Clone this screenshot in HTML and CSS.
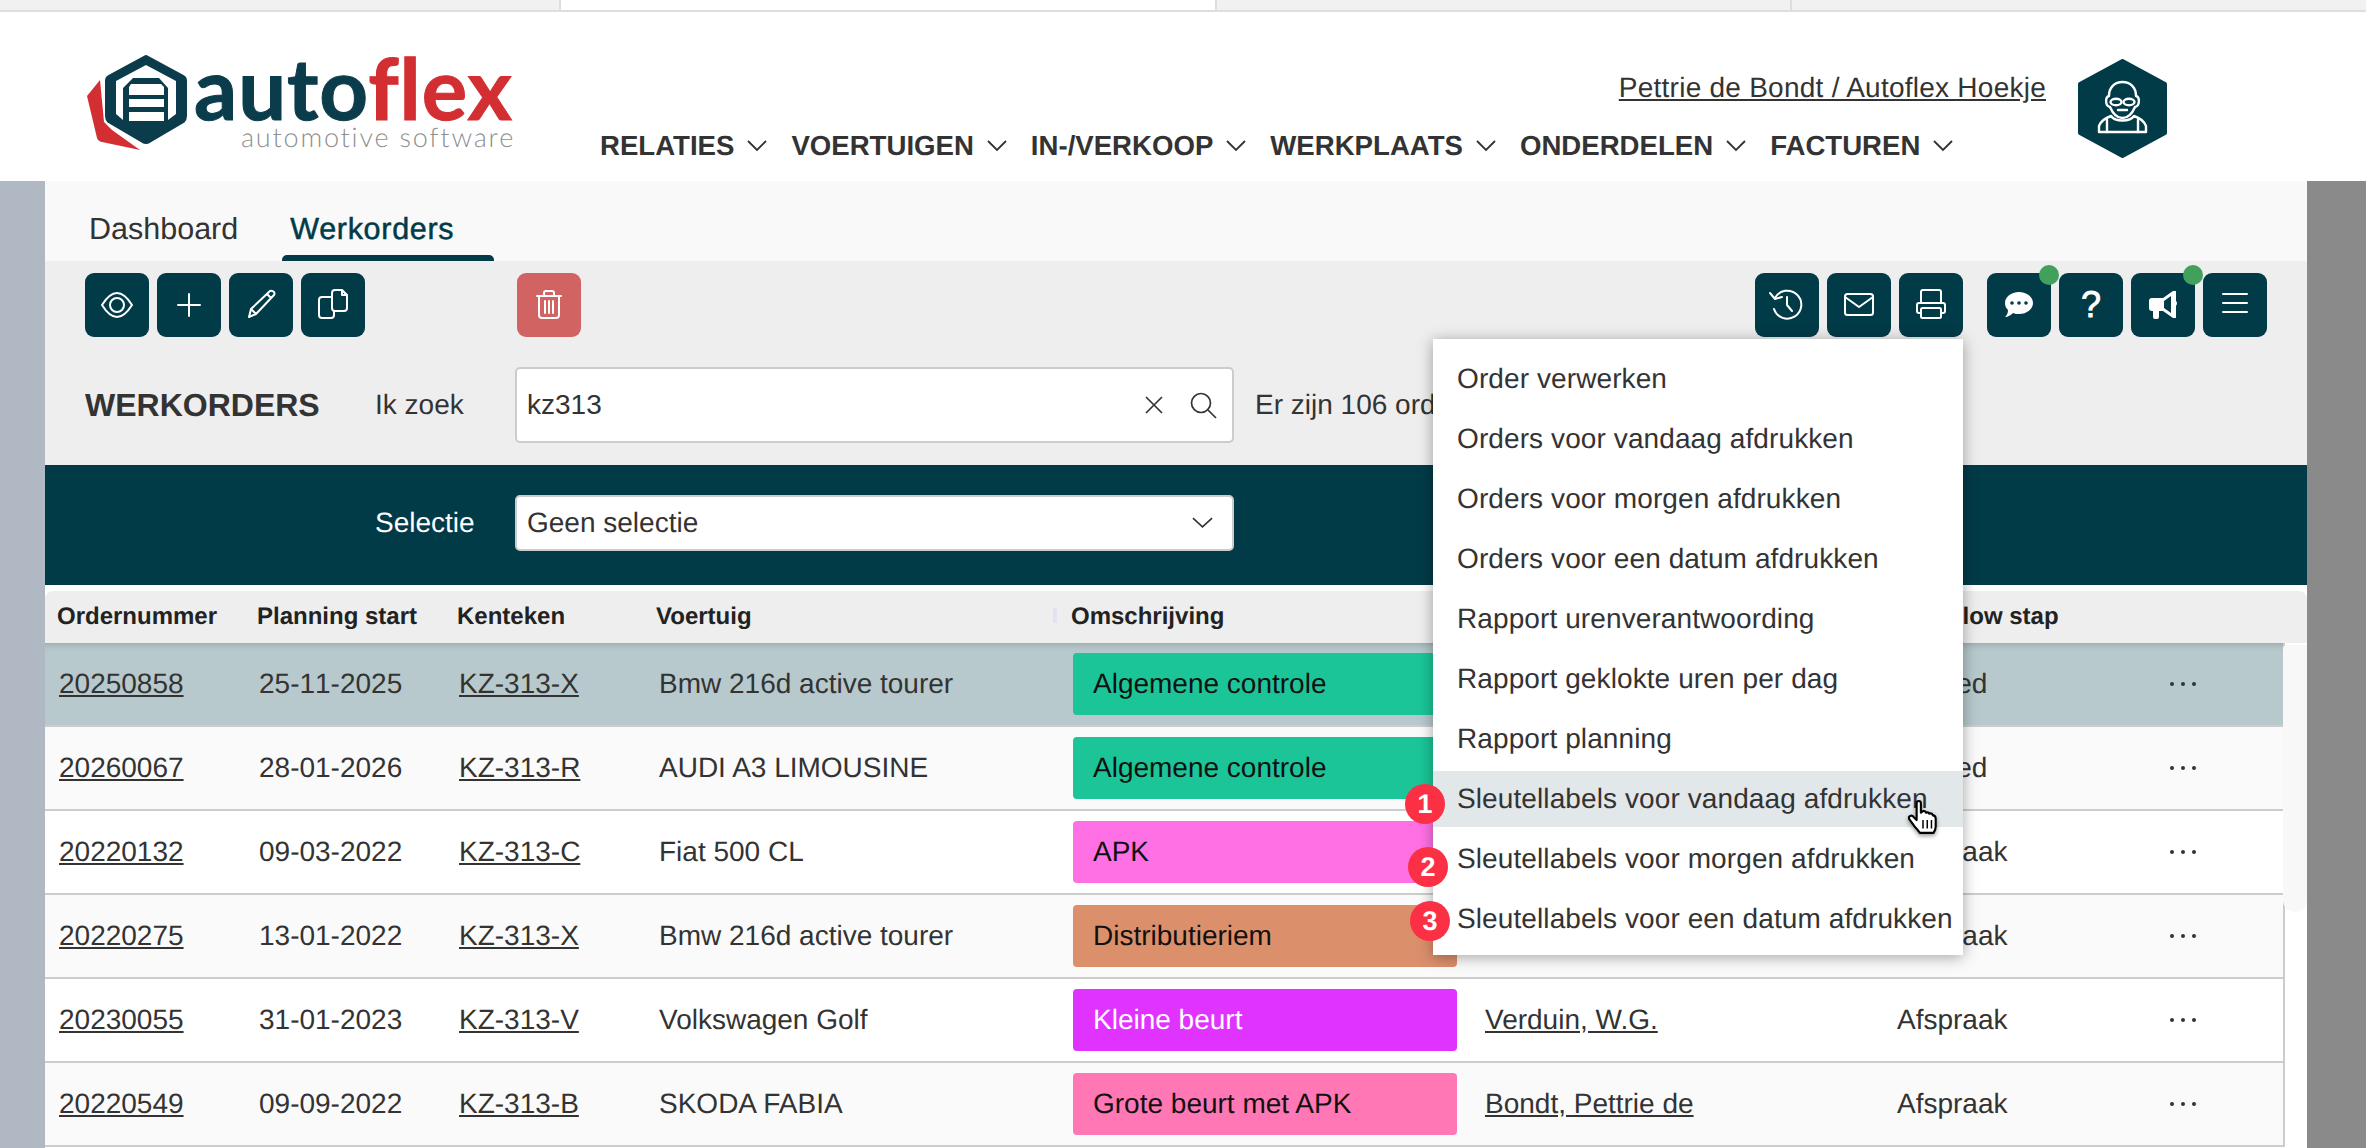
FILE: index.html
```html
<!DOCTYPE html>
<html lang="nl">
<head>
  <meta charset="UTF-8">
  <meta name="viewport" content="width=device-width, initial-scale=1.0">
  <title>Autoflex - Werkorders</title>
  <link rel="stylesheet" href="styles.css">
</head>

<body>
  <div class="browser-tabs">
    <div class="browser-tab tab-first"></div>
    <div class="browser-tab tab-current"></div>
    <div class="browser-tab tab-second"></div>
    <div class="browser-tab tab-last"></div>
  </div>

  <header class="site-header">
    <svg class="logo" viewBox="85 30 440 130" width="440" height="130">
      <path d="M100 80 L87 96 L97 138 Q98 141 102 142 L140 150 L112 130 L104 122 Z" fill="#d32f33"/>
      <path d="M146 57 L183 77 Q185 78 185 81 V116 Q185 119 183 121 L149 141 Q146 143 143 141 L109 121 Q107 119 107 116 V81 Q107 78 109 77 Z" fill="#0b3c4b" stroke="#0b3c4b" stroke-width="4" stroke-linejoin="round"/>
      <path d="M146 65 L176 81 V114 L168 120 V88 L159 78 H133 L123 88 V120 L116 114 V81 Z" fill="#fff"/>
      <path d="M131 84 H161 L164 87 V95 H129 V87 Z" fill="#fff"/>
      <rect x="129" y="99" width="35" height="8" fill="#fff"/>
      <rect x="129" y="112" width="35" height="9" fill="#fff"/>
      <text class="logo-name" x="194" y="120">auto<tspan class="logo-flex">flex</tspan></text>
      <text class="logo-sub" x="241" y="147">automotive software</text>
    </svg>

    <div class="header-main">
      <a class="user-name" href="#">Pettrie de Bondt / Autoflex Hoekje</a>
      <nav class="main-nav">
        <a class="nav-item" href="#">RELATIES <svg class="nav-chevron" viewBox="0 0 20 12"><path d="M1 1l9 9 9-9"/></svg></a>
        <a class="nav-item" href="#">VOERTUIGEN <svg class="nav-chevron" viewBox="0 0 20 12"><path d="M1 1l9 9 9-9"/></svg></a>
        <a class="nav-item" href="#">IN-/VERKOOP <svg class="nav-chevron" viewBox="0 0 20 12"><path d="M1 1l9 9 9-9"/></svg></a>
        <a class="nav-item" href="#">WERKPLAATS <svg class="nav-chevron" viewBox="0 0 20 12"><path d="M1 1l9 9 9-9"/></svg></a>
        <a class="nav-item" href="#">ONDERDELEN <svg class="nav-chevron" viewBox="0 0 20 12"><path d="M1 1l9 9 9-9"/></svg></a>
        <a class="nav-item" href="#">FACTUREN <svg class="nav-chevron" viewBox="0 0 20 12"><path d="M1 1l9 9 9-9"/></svg></a>
      </nav>
    </div>

    <svg class="avatar" viewBox="0 0 89 99" width="89" height="99">
      <path d="M44.5 2 L87 25 V74 L44.5 97 L2 74 V25 Z" fill="#023b48" stroke="#023b48" stroke-width="4" stroke-linejoin="round"/>
      <g fill="none" stroke="#fff" stroke-width="2.4" stroke-linecap="round" stroke-linejoin="round">
        <path d="M31 37 C31 28 37 23 44.5 23 C52 23 58 28 58 37 C62 38 62 47 57 48 C54 55 50 59 44.5 59 C39 59 35 55 32 48 C27 47 27 38 31 37Z"/>
        <ellipse cx="38" cy="43" rx="5.5" ry="3.2"/>
        <ellipse cx="51" cy="43" rx="5.5" ry="3.2"/>
        <path d="M40 51 H49"/>
        <path d="M33 57 C27 59 23 62 21 67 V73 H68 V67 C66 62 62 59 56 57 C52 63 37 63 33 57Z"/>
        <path d="M29 61 V73 M60 61 V73"/>
      </g>
    </svg>
  </header>

  <div class="page">
    <div class="side-left"></div>

    <main class="panel">
      <div class="tabs">
        <a class="tab" href="#">Dashboard</a>
        <a class="tab tab-active" href="#">Werkorders</a>
      </div>

      <section class="toolbar-area">
        <div class="toolbar">
          <div class="btn-group">
            <button class="icon-btn"><svg viewBox="0 0 64 64"><path d="M17 32 C22 24 27 20 32 20 C37 20 42 24 47 32 C42 40 37 44 32 44 C27 44 22 40 17 32Z"/><circle cx="32" cy="32" r="7"/></svg></button>
            <button class="icon-btn"><svg viewBox="0 0 64 64"><path d="M32 21 V43 M21 32 H43"/></svg></button>
            <button class="icon-btn"><svg viewBox="0 0 64 64"><path d="M20 44 L22 36 L41 18 Q43 17 45 19 Q46 21 45 22 L27 41 Z M22 36 L27 41 M38 21 L42 25"/></svg></button>
            <button class="icon-btn"><svg viewBox="0 0 64 64"><path d="M30 24 H21 Q18 24 18 27 V42 Q18 45 21 45 H30 Q33 45 33 42 V38"/><path d="M34 17 H41 L46 22 V35 Q46 38 43 38 H34 Q31 38 31 35 V20 Q31 17 34 17Z M41 17 V22 H46"/></svg></button>
          </div>
          <button class="icon-btn btn-delete"><svg viewBox="0 0 64 64"><path d="M20 23 H44 M27 23 V20 Q27 18 29 18 H35 Q37 18 37 20 V23 M22 23 V42 Q22 45 25 45 H39 Q42 45 42 42 V23 M28 28 V40 M32 28 V40 M36 28 V40"/></svg></button>

          <div class="btn-group group-right">
            <button class="icon-btn"><svg viewBox="0 0 64 64"><path d="M20 25 A14 14 0 1 1 19 36 M15 20 L20 26 L27 24 M32 24 V32 L37 38"/></svg></button>
            <button class="icon-btn"><svg viewBox="0 0 64 64"><rect x="18" y="21" width="28" height="21" rx="2.5"/><path d="M18 24 L32 34 L46 24"/></svg></button>
            <button class="icon-btn"><svg viewBox="0 0 64 64"><path d="M22 30 V19 Q22 17 24 17 H40 Q42 17 42 19 V30 M22 40 H20 Q18 40 18 38 V32 Q18 30 20 30 H44 Q46 30 46 32 V38 Q46 40 44 40 H42"/><rect x="22" y="35" width="20" height="10" rx="1.5"/></svg></button>
          </div>

          <div class="btn-group">
            <button class="icon-btn has-dot"><svg viewBox="0 0 64 64"><path class="solid" d="M32 19 C40 19 46 24 46 30 C46 36 40 41 32 41 C30 41 28 41 26 40 C24 42 21 44 18 44 C20 42 21 40 21 37 C19 35 18 33 18 30 C18 24 24 19 32 19Z"/><circle class="dark" cx="25" cy="30" r="1.8"/><circle class="dark" cx="32" cy="30" r="1.8"/><circle class="dark" cx="39" cy="30" r="1.8"/></svg></button>
            <button class="icon-btn btn-question">?</button>
            <button class="icon-btn has-dot"><svg viewBox="0 0 64 64"><path class="solid" d="M42 18 H45 V28 Q47 30 45 33 V45 H42 L32 38 H28 V44 Q28 46 26 46 H24 Q22 46 22 44 V38 H21 Q18 38 18 35 V28 Q18 25 21 25 H32 Z M40 23 L33 28 V35 L40 40 Z" fill-rule="evenodd"/></svg></button>
            <button class="icon-btn"><svg viewBox="0 0 64 64"><path d="M20 21 H44 M20 30 H44 M20 39 H44"/></svg></button>
          </div>
        </div>

        <div class="search-row">
          <h1 class="page-title">WERKORDERS</h1>
          <label class="field-label">Ik zoek</label>
          <div class="field search-box">
            <input class="search-input" type="text" value="kz313">
            <svg class="field-icon icon-clear" viewBox="0 0 20 20"><path d="M2 2 L18 18 M18 2 L2 18"/></svg>
            <svg class="field-icon icon-search" viewBox="0 0 28 28"><circle cx="12" cy="12" r="9.5"/><path d="M19 19 L27 27"/></svg>
          </div>
          <span class="result-count">Er zijn 106 orders gevonden</span>
        </div>
      </section>

      <section class="selection-bar">
        <label class="field-label">Selectie</label>
        <div class="field select-box">
          <span>Geen selectie</span>
          <svg class="field-icon icon-chevron" viewBox="0 0 22 12"><path d="M1 1 L11 10 L21 1"/></svg>
        </div>
      </section>

      <div class="table-head">
        <div>Ordernummer</div>
        <div>Planning start</div>
        <div>Kenteken</div>
        <div>Voertuig</div>
        <div class="head-description">Omschrijving</div>
        <div>Monteur</div>
        <div>Workflow stap</div>
        <div></div>
      </div>

      <div class="table-wrap">
        <div class="table-body">
          <div class="row row-selected">
            <a href="#">20250858</a><span>25-11-2025</span><a href="#">KZ-313-X</a><span>Bmw 216d active tourer</span>
            <div class="pill pill-green">Algemene controle</div><a href="#">Bondt, Pettrie de</a><span>Started</span>
            <svg class="row-dots" viewBox="0 0 28 6"><circle cx="3" cy="3" r="2"/><circle cx="14" cy="3" r="2"/><circle cx="25" cy="3" r="2"/></svg>
          </div>
          <div class="row">
            <a href="#">20260067</a><span>28-01-2026</span><a href="#">KZ-313-R</a><span>AUDI A3 LIMOUSINE</span>
            <div class="pill pill-green">Algemene controle</div><a href="#">Bondt, Pettrie de</a><span>Started</span>
            <svg class="row-dots" viewBox="0 0 28 6"><circle cx="3" cy="3" r="2"/><circle cx="14" cy="3" r="2"/><circle cx="25" cy="3" r="2"/></svg>
          </div>
          <div class="row">
            <a href="#">20220132</a><span>09-03-2022</span><a href="#">KZ-313-C</a><span>Fiat 500 CL</span>
            <div class="pill pill-pink">APK</div><a href="#">Bondt, Pettrie de</a><span>Afspraak</span>
            <svg class="row-dots" viewBox="0 0 28 6"><circle cx="3" cy="3" r="2"/><circle cx="14" cy="3" r="2"/><circle cx="25" cy="3" r="2"/></svg>
          </div>
          <div class="row">
            <a href="#">20220275</a><span>13-01-2022</span><a href="#">KZ-313-X</a><span>Bmw 216d active tourer</span>
            <div class="pill pill-tan">Distributieriem</div><a href="#">Bondt, Pettrie de</a><span>Afspraak</span>
            <svg class="row-dots" viewBox="0 0 28 6"><circle cx="3" cy="3" r="2"/><circle cx="14" cy="3" r="2"/><circle cx="25" cy="3" r="2"/></svg>
          </div>
          <div class="row">
            <a href="#">20230055</a><span>31-01-2023</span><a href="#">KZ-313-V</a><span>Volkswagen Golf</span>
            <div class="pill pill-purple">Kleine beurt</div><a href="#">Verduin, W.G.</a><span>Afspraak</span>
            <svg class="row-dots" viewBox="0 0 28 6"><circle cx="3" cy="3" r="2"/><circle cx="14" cy="3" r="2"/><circle cx="25" cy="3" r="2"/></svg>
          </div>
          <div class="row">
            <a href="#">20220549</a><span>09-09-2022</span><a href="#">KZ-313-B</a><span>SKODA FABIA</span>
            <div class="pill pill-rose">Grote beurt met APK</div><a href="#">Bondt, Pettrie de</a><span>Afspraak</span>
            <svg class="row-dots" viewBox="0 0 28 6"><circle cx="3" cy="3" r="2"/><circle cx="14" cy="3" r="2"/><circle cx="25" cy="3" r="2"/></svg>
          </div>
        </div>
        <div class="scroll-track"><div class="scroll-thumb"></div></div>
      </div>
    </main>

    <div class="side-right"></div>
  </div>

  <!-- print menu, open over the toolbar and the table -->
  <div class="print-menu">
    <div class="menu-item">Order verwerken</div>
    <div class="menu-item">Orders voor vandaag afdrukken</div>
    <div class="menu-item">Orders voor morgen afdrukken</div>
    <div class="menu-item">Orders voor een datum afdrukken</div>
    <div class="menu-item">Rapport urenverantwoording</div>
    <div class="menu-item">Rapport geklokte uren per dag</div>
    <div class="menu-item">Rapport planning</div>
    <div class="menu-item menu-hover">Sleutellabels voor vandaag afdrukken<span class="step step-1">1</span></div>
    <div class="menu-item">Sleutellabels voor morgen afdrukken<span class="step step-2">2</span></div>
    <div class="menu-item">Sleutellabels voor een datum afdrukken<span class="step step-3">3</span></div>
  </div>

  <svg class="hand-cursor" viewBox="0 0 30 34" width="32" height="36">
    <path d="M9 3 Q9 1 11 1 Q13 1 13 3 V12 L15 10.5 Q17 10 18 12 Q20 11 21 13 Q23 12 24.5 14.5 Q27 14.5 27 18 V25 Q27 28 25 31 H12 Q10 28 7 25 L2 18 Q1 16 3 15 Q5 14 7 17 L9 19 Z" fill="#fff" stroke="#000" stroke-width="2" stroke-linejoin="round"/>
    <path d="M15 19 V27 M19 19 V27 M23 19 V27" stroke="#000" stroke-width="1.4" fill="none"/>
  </svg>
</body>
</html>
```

FILE: styles.css
```css
* {
  box-sizing: border-box;
}
html, body {
  margin: 0;
  padding: 0;
  height: 100%;
  overflow: hidden;
}
body {
  position: relative;
  font-family: "Liberation Sans", Arial, sans-serif;
  font-size: 28px;
  color: #333;
  background: #fff;
  text-rendering: geometricPrecision;
}
a {
  color: inherit;
}

/* browser tab strip */
.browser-tabs {
  display: flex;
  height: 12px;
  background: #f1f1f1;
  border-bottom: 2px solid #dedede;
}
.browser-tab {
  height: 10px;
  border-right: 2px solid #dedede;
}
.tab-first { width: 561px; }
.tab-current { width: 656px; background: #fff; }
.tab-second { width: 575px; }
.tab-last { flex: 1; border-right: none; }

/* header */
.site-header {
  display: flex;
  height: 169px;
  padding-left: 85px;
  background: #fff;
}
.logo {
  margin-top: 18px;
  flex: none;
}
.logo-name {
  font-family: Lato, sans-serif;
  font-size: 85px;
  font-weight: 700;
  letter-spacing: 1px;
  fill: #0b3c4b;
  stroke: #0b3c4b;
  stroke-width: 1;
}
.logo-flex {
  fill: #d32f33;
  stroke: #d32f33;
}
.logo-sub {
  font-family: Lato, sans-serif;
  font-size: 27px;
  font-weight: 300;
  letter-spacing: 1.8px;
  fill: #8f8f8f;
}
.header-main {
  display: flex;
  flex-direction: column;
  width: 1446px;
  margin-left: 75px;
  padding-top: 56px;
}
.user-name {
  align-self: flex-end;
  line-height: 40px;
  letter-spacing: 0.25px;
}
.main-nav {
  display: flex;
  gap: 24px;
  margin-top: 18px;
}
.nav-item {
  display: flex;
  align-items: center;
  gap: 13px;
  line-height: 40px;
  font-size: 27.6px;
  font-weight: 700;
  text-decoration: none;
  white-space: nowrap;
}
.nav-chevron {
  width: 20px;
  height: 12px;
  fill: none;
  stroke: #333;
  stroke-width: 1.8;
}
.avatar {
  flex: none;
  margin: 47px 0 0 32px;
}

/* page frame */
.page {
  display: flex;
  height: 967px;
}
.side-left {
  width: 45px;
  background: #b0b8c4;
}
.side-right {
  width: 59px;
  background: #8a8a8a;
}
.panel {
  width: 2262px;
  background: #fff;
}

/* tabs */
.tabs {
  display: flex;
  gap: 2px;
  height: 80px;
  padding-left: 36px;
  background: #f9f9f9;
}
.tab {
  position: relative;
  height: 80px;
  padding: 27px 42px 0 8px;
  line-height: 42px;
  font-size: 30.5px;
  text-decoration: none;
}
.tab-active {
  width: 212px;
  padding-right: 0;
  color: #023b48;
  -webkit-text-stroke: 0.5px #023b48;
  letter-spacing: 0.7px;
}
.tab-active::after {
  content: "";
  position: absolute;
  left: 0;
  right: 0;
  bottom: 0;
  height: 6px;
  border-radius: 5px 5px 0 0;
  background: #023b48;
}

/* toolbar */
.toolbar-area {
  height: 204px;
  padding-top: 12px;
  background: #eee;
}
.toolbar {
  display: flex;
  padding: 0 40px;
}
.btn-group {
  display: flex;
  gap: 8px;
}
.group-right {
  margin: 0 24px 0 auto;
}
.icon-btn {
  position: relative;
  width: 64px;
  height: 64px;
  padding: 0;
  border: none;
  border-radius: 9px;
  background: #023b48;
  color: #fff;
}
.icon-btn svg {
  display: block;
  width: 64px;
  height: 64px;
  fill: none;
  stroke: #fff;
  stroke-width: 2;
  stroke-linecap: round;
  stroke-linejoin: round;
}
.icon-btn .solid {
  fill: #fff;
  stroke: none;
}
.icon-btn .dark {
  fill: #023b48;
  stroke: none;
}
.btn-delete {
  margin-left: 152px;
  background: #d26363;
}
.btn-question {
  font-family: "Liberation Sans", Arial, sans-serif;
  font-size: 36px;
  line-height: 64px;
  -webkit-text-stroke: 0.8px #fff;
}
.has-dot::after {
  content: "";
  position: absolute;
  top: -8px;
  right: -8px;
  width: 20px;
  height: 20px;
  border-radius: 50%;
  background: #41a05b;
}

/* search and selection */
.search-row {
  display: flex;
  align-items: center;
  height: 76px;
  margin-top: 30px;
  padding-left: 40px;
}
.page-title {
  width: 290px;
  margin: 0;
  font-size: 32px;
  font-weight: 700;
}
.field-label {
  width: 140px;
}
.field {
  display: flex;
  align-items: center;
  width: 719px;
  padding: 0 15px 0 10px;
  background: #fff;
  border: 2px solid #ccc;
  border-radius: 5px;
}
.search-box {
  height: 76px;
}
.search-input {
  flex: 1;
  min-width: 0;
  border: none;
  padding: 0;
  outline: none;
  font: inherit;
  color: #333;
}
.field-icon {
  flex: none;
  fill: none;
  stroke: #333;
  stroke-width: 1.7;
}
.icon-clear {
  width: 20px;
  height: 20px;
  margin-right: 25px;
}
.icon-search {
  width: 28px;
  height: 28px;
}
.result-count {
  margin-left: 21px;
  white-space: nowrap;
}
.selection-bar {
  display: flex;
  align-items: center;
  height: 120px;
  padding: 0 0 4px 330px;
  background: #023b48;
  color: #fff;
}
.select-box {
  height: 56px;
  justify-content: space-between;
  color: #333;
}
.icon-chevron {
  width: 21px;
  height: 12px;
  margin-right: 4px;
}

/* table */
.table-head, .row {
  display: grid;
  grid-template-columns: 200px 200px 199px 414px 413px 412px 273px 40px;
  align-items: center;
  padding-left: 13px;
}
.table-head {
  height: 52px;
  margin-top: 6px;
  padding-left: 12px;
  background: #eee;
  border-radius: 8px 8px 0 0;
  font-size: 24px;
  font-weight: 700;
  color: #222;
}
.head-description {
  position: relative;
  padding-left: 1px;
}
.head-description::before {
  content: "";
  position: absolute;
  left: -17px;
  top: 5px;
  width: 4px;
  height: 15px;
  background: #e0e4ec;
}
.table-wrap {
  display: flex;
}
.table-body {
  width: 2240px;
  border-right: 2px solid #ccc;
}
.row {
  height: 84px;
  background: #fafafa;
  border-bottom: 2px solid #ccc;
  white-space: nowrap;
}
.row > a, .row > span {
  padding-left: 1px;
}
.row > span:nth-child(2) {
  font-kerning: none;
}
.row > span:nth-child(4) {
  padding-left: 2px;
}
.row:nth-child(odd) {
  background: #fff;
}
.row-selected, .row-selected:nth-child(odd) {
  background: #b7c9cc;
  box-shadow: inset 0 8px 8px -8px rgba(0, 0, 0, 0.25);
}
.pill {
  display: flex;
  align-items: center;
  height: 62px;
  width: 384px;
  margin-left: 2px;
  padding-left: 20px;
  border-radius: 4px;
  color: #111;
}
.pill-green { background: #1bc597; }
.pill-pink { background: #ff70e4; }
.pill-tan { background: #dc8f6b; }
.pill-purple { background: #e133ff; color: #fff; }
.pill-rose { background: #ff78b5; }
.row-dots {
  width: 28px;
  height: 6px;
  fill: #333;
}
.scroll-track {
  width: 22px;
  background: #fff;
}
.scroll-thumb {
  position: relative;
  width: 24px;
  height: 267px;
  margin: 2px 0 0 -2px;
  background: #f8f8f8;
  border-radius: 4px 0 12px 12px;
}

/* open print menu */
.print-menu {
  position: absolute;
  left: 1433px;
  top: 339px;
  width: 530px;
  height: 616px;
  padding-top: 12px;
  background: #fff;
  box-shadow: 0 2px 14px rgba(0, 0, 0, 0.35);
}
.menu-item {
  position: relative;
  height: 56px;
  margin-bottom: 4px;
  padding-left: 24px;
  line-height: 56px;
  letter-spacing: 0.1px;
  white-space: nowrap;
}
.menu-hover {
  background: #e2e7e9;
}
.step {
  position: absolute;
  width: 40px;
  height: 40px;
  border-radius: 50%;
  background: #fb3044;
  color: #fff;
  font-size: 27px;
  font-weight: 700;
  line-height: 40px;
  text-align: center;
}
.step-1 { left: -28px; top: 13px; }
.step-2 { left: -25px; top: 16px; }
.step-3 { left: -23px; top: 10px; }
.hand-cursor {
  position: absolute;
  left: 1907px;
  top: 800px;
  filter: drop-shadow(0 2px 2px rgba(0, 0, 0, 0.4));
}
```
